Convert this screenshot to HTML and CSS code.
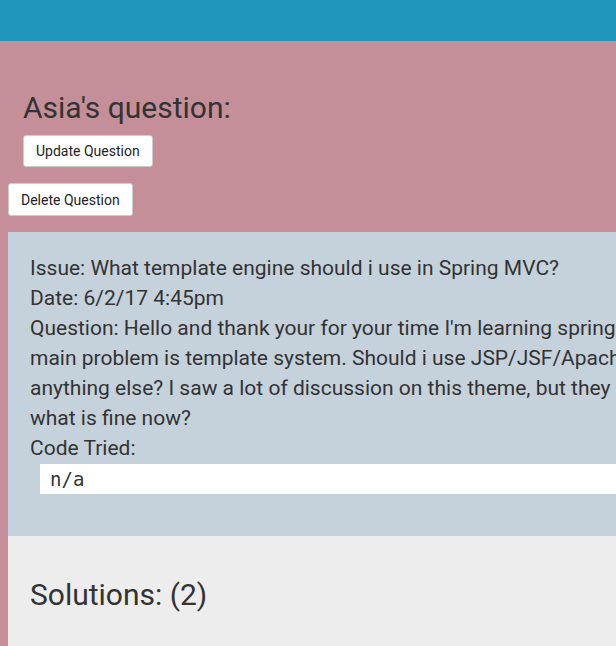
FILE: index.html
```html
<!DOCTYPE html>
<html>
<head>
<meta charset="utf-8">
<link rel="stylesheet" href="styles.css">
</head>
<body>
<header class="topbar"></header>
<main class="page">
  <div class="intro">
    <h1 class="title">Asia's question:</h1>
    <button class="btn">Update Question</button>
  </div>
  <button class="btn btn-delete">Delete Question</button>
  <section class="question">
    <p class="line">Issue: What template engine should i use in Spring MVC?</p>
    <p class="line">Date: 6/2/17 4:45pm</p>
    <p class="line">Question: Hello and thank your for your time I'm learning spring MVC and my main problem is template system. Should i use JSP/JSF/Apache Tiles or anything else? I saw a lot of discussion on this theme, but they are quite old, what is fine now?</p>
    <p class="line">Code Tried:</p>
    <pre class="code">n/a</pre>
  </section>
  <section class="solutions">
    <h2 class="solutions-title">Solutions: (2)</h2>
  </section>
</main>
</body>
</html>
```
FILE: styles.css
```css
html, body {
  margin: 0;
  padding: 0;
  overflow: hidden;
}
body {
  font-family: Roboto, "Liberation Sans", sans-serif;
  color: #333;
  background: #c48f99;
  width: 800px;
}
.topbar {
  height: 41px;
  background: #2196bb;
}
.page {
  padding-left: 8px;
}
.intro {
  padding: 51px 15px 0;
}
.title {
  margin: 0;
  font-size: 30px;
  font-weight: 400;
  line-height: 31px;
}
.btn {
  display: block;
  font-family: Roboto, "Liberation Sans", sans-serif;
  font-size: 14px;
  color: #222;
  background: #fff;
  border: 1px solid #ccc;
  border-radius: 3px;
  height: 32px;
  padding: 0 12px;
  margin-top: 12px;
}
.btn-delete {
  margin-top: 16px;
  height: 33px;
}
.question {
  margin-top: 16px;
  background: #c5d2db;
  padding: 21px 0 42px 22px;
}
.line {
  margin: 0;
  font-size: 21px;
  line-height: 30px;
  width: 718px;
}
.code {
  margin: 1px 0 0 10px;
  background: #fff;
  height: 30px;
  padding: 0 10px;
  font-family: "DejaVu Sans Mono", monospace;
  font-size: 19px;
  line-height: 30px;
}
.solutions {
  background: #ededed;
  padding: 40px 22px 40px;
}
.solutions-title {
  margin: 0;
  font-size: 30px;
  font-weight: 400;
  line-height: 38px;
}
```
